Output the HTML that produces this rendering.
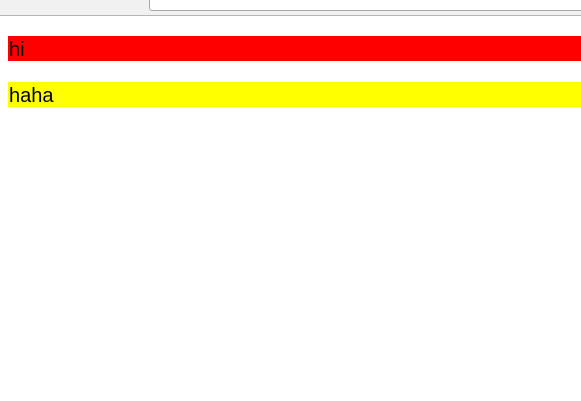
<!DOCTYPE html>
<html><head><style>
html,body{margin:0;padding:0;width:581px;height:401px;overflow:hidden;background:#fff;font-family:"Liberation Sans",sans-serif;}
.bar{position:absolute;left:0;top:0;width:581px;height:15px;background:#f1f1f1;border-bottom:1px solid #b5b5b5;}
.addr{position:absolute;left:149px;top:-4px;width:440px;height:13px;background:#fff;border:1px solid #a9a9a9;border-radius:3px;}
.b{position:absolute;left:8px;width:573px;height:25px;font-size:20px;line-height:28px;color:#000;padding-left:1px;box-sizing:border-box;overflow:hidden;}
</style></head><body>
<div class="bar"><div class="addr"></div></div>
<div class="b" style="top:36px;background:#f00">hi</div>
<div class="b" style="top:82px;background:#ff0">haha</div>
</body></html>
